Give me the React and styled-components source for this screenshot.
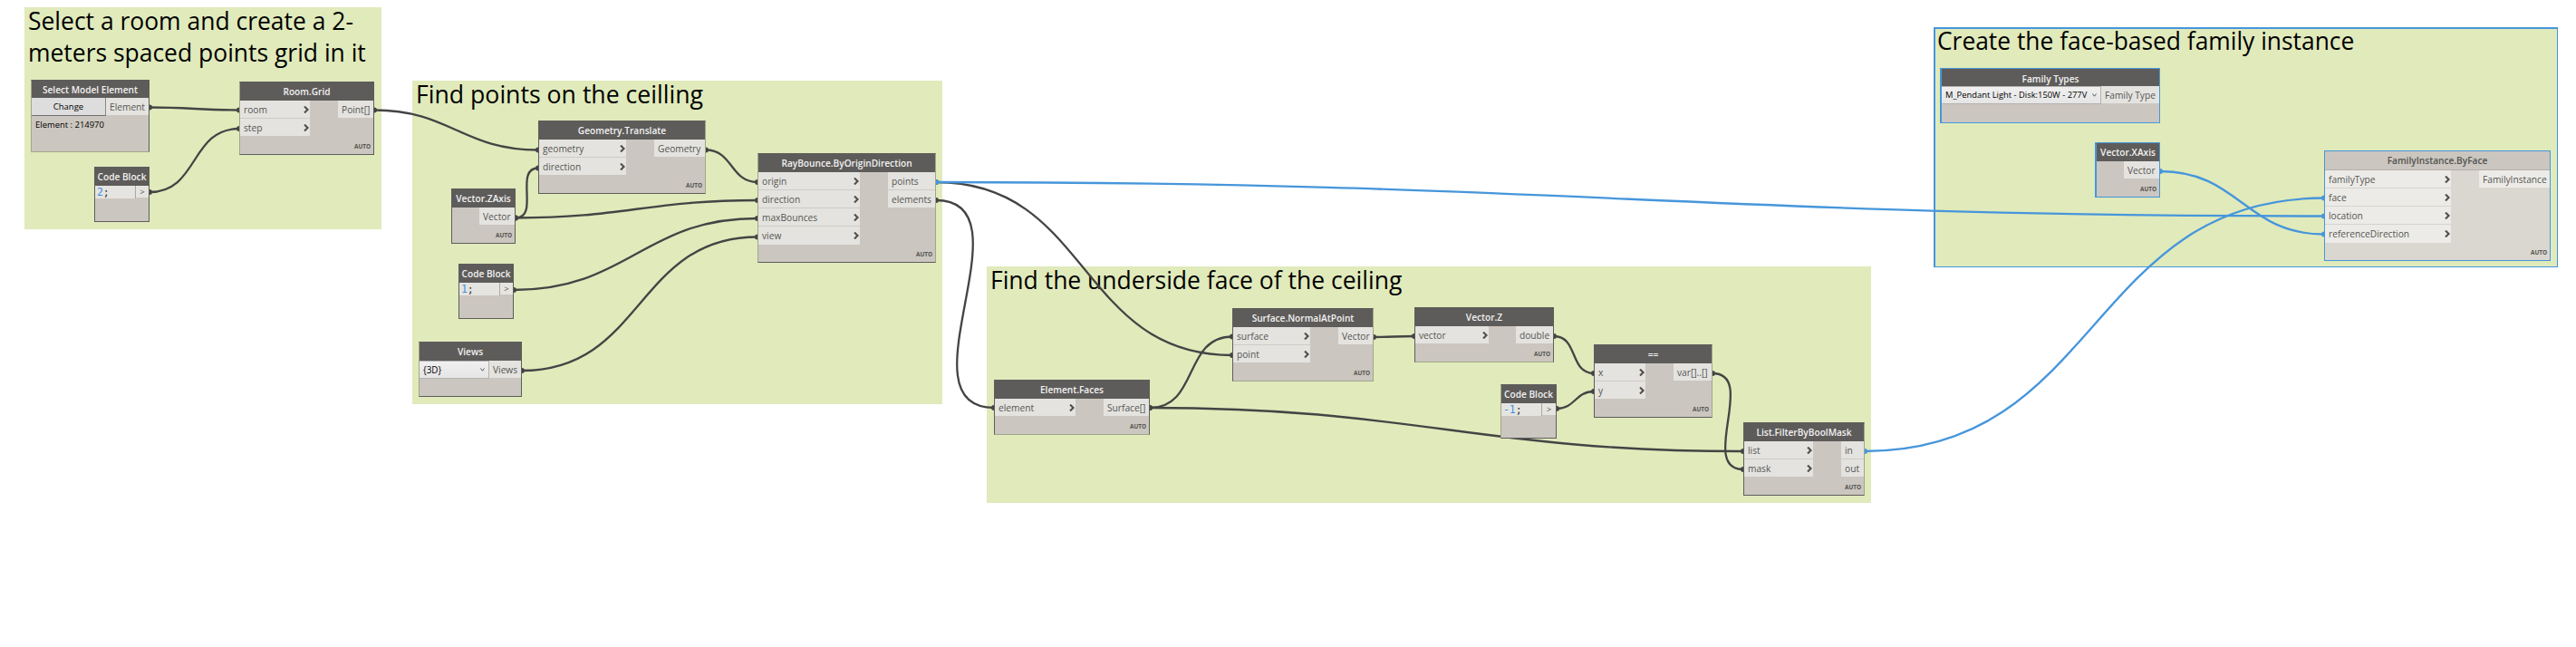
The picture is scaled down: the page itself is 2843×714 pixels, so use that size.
import React from "react";
import styled, { createGlobalStyle, css } from "styled-components";

const BLUE = "#4696db";
const WIRE = "#444444";
const EDGE = "#5e5d5b";
const SOFT_EDGE = "#a3a689";

const Global = createGlobalStyle`
  body { margin: 0; background: #fff; }
  * { box-sizing: border-box; }
`;

const Canvas = styled.main`
  position: relative;
  width: 2843px;
  height: 714px;
  overflow: hidden;
  background: #fff;
  font-family: "Open Sans", "Noto Sans", sans-serif;
`;

const Group = styled.section`
  position: absolute;
  left: ${(p) => p.$x}px;
  top: ${(p) => p.$y}px;
  width: ${(p) => p.$w}px;
  height: ${(p) => p.$h}px;
  padding-left: 3.7px;
  background: #e0eabb;
  ${(p) =>
    p.$selected &&
    css`
      border: 1px solid ${BLUE};
      border-width: 2px 1px 1px 2px;
      padding-left: 2px;
    `}
`;

const GroupTitle = styled.h2`
  margin: ${(p) => (p.$selected ? -4 : -2)}px 0 0;
  font-size: 27px;
  font-weight: 400;
  line-height: 34.7px;
  color: #000;
  white-space: pre;
  transform: scaleX(${(p) => p.$stretch});
  transform-origin: left top;
`;

const Wires = styled.svg`
  position: absolute;
  inset: 0;
  fill: none;
`;

const NodeBox = styled.article`
  position: absolute;
  left: ${(p) => p.$x}px;
  top: ${(p) => p.$y}px;
  width: ${(p) => p.$w}px;
  height: ${(p) => p.$h}px;
  display: flex;
  flex-direction: column;
  border: 1px solid ${(p) => (p.$selected ? BLUE : EDGE)};
  ${(p) => (p.$soft ?? []).map((side) => `border-${side}-color: ${SOFT_EDGE};`)}
  ${(p) => p.$thick && css`border-left-width: 2px;`}
  background: ${(p) => (p.$inactive ? "#dad7d0" : "#cbc6bf")};
`;

const Header = styled.header`
  flex: none;
  height: ${(p) => p.$h}px;
  padding-top: ${(p) => p.$pt ?? 0}px;
  display: flex;
  align-items: center;
  justify-content: center;
  background: #5e5c5a;
  color: #f2f2f2;
  font-size: 10.15px;
  font-weight: 600;
  line-height: 18px;
  white-space: nowrap;
  ${(p) =>
    p.$inactive &&
    css`
      background: #cbc6bf;
      color: #525250;
      border-bottom: 1px solid #b4afa8;
    `}
`;

const Body = styled.div`
  flex: 1;
  display: flex;
  justify-content: space-between;
  align-items: flex-start;
`;

const Ports = styled.div`
  display: flex;
  flex-direction: column;
  gap: 1px;
  width: ${(p) => p.$w}px;
  background: ${(p) => (p.$inactive ? "#d6d4cf" : "#cfccc7")};
  ${(p) => p.$right && css`margin-left: auto;`}
`;

const Port = styled.div`
  height: 19.15px;
  display: flex;
  align-items: center;
  justify-content: space-between;
  padding: 0 4px;
  background: ${(p) => (p.$inactive ? "#ecebe7" : "#e4e3df")};
  color: #555553;
  font-size: 10.2px;
  line-height: 14px;
  white-space: nowrap;
`;

const Chevron = styled.svg`
  flex: none;
  width: 6px;
  height: 8px;
  margin-right: -3px;
  fill: none;
  stroke: #4f4e4c;
  stroke-width: 2.1;
`;

const Auto = styled.footer`
  position: absolute;
  right: 3px;
  bottom: 3px;
  font-size: 6.4px;
  line-height: 10px;
  font-weight: 700;
  color: #555452;
`;

const Change = styled.button`
  width: 82px;
  height: 20px;
  padding: 0;
  border: 0;
  border-right: 1px solid #8a8986;
  border-bottom: 1px solid #707070;
  background: #dddddd;
  font: 400 9.5px/18px "Open Sans", sans-serif;
  color: #000;
`;

const Note = styled.p`
  margin: 0;
  height: 39px;
  padding: 4px 0 0 4px;
  font-size: 9.45px;
  line-height: 12px;
  color: #000;
`;

const Code = styled.code`
  width: 45px;
  height: 14px;
  padding-left: 2px;
  border-right: 1px solid #aaa7a3;
  background: #e6e4e0;
  font: 400 11.4px/15px "DejaVu Sans Mono", "Liberation Mono", monospace;
  color: #333;
  white-space: nowrap;
`;

const Num = styled.span`
  color: #3890e8;
`;

const CodeOut = styled.div`
  flex: 1;
  height: 13px;
  background: #e6e4e0;
  color: #555;
  font-size: 9.5px;
  line-height: 13px;
  text-align: center;
`;

const Select = styled.div`
  width: ${(p) => p.$w}px;
  height: 20px;
  display: flex;
  align-items: center;
  justify-content: space-between;
  padding: 0 4px 1px 4px;
  border: 1px solid #b4b2b0;
  border-left: 0;
  background: linear-gradient(#f0f0f0, #e5e5e5);
  color: #000;
  font-size: ${(p) => p.$fs}px;
  line-height: 16px;
  white-space: nowrap;
`;

const Arrow = styled.svg`
  width: 5px;
  height: 4px;
  fill: none;
  stroke: #555;
`;

function Node({ x, y, r, b, title, hh = 20, ins = [], outs, inW, outW, selected, thick, inactive, soft }) {
  return (
    <NodeBox $x={x} $y={y} $w={r - x} $h={b - y} $selected={selected} $thick={thick} $inactive={inactive} $soft={soft}>
      <Header $h={hh} $inactive={inactive}>{title}</Header>
      <Body>
        {ins.length > 0 && (
          <Ports $w={inW} $inactive={inactive}>
            {ins.map((name) => (
              <Port key={name} $inactive={inactive}>
                {name}
                <Chevron viewBox="0 0 6 8"><path d="M1 0.5 4.5 4 1 7.5" /></Chevron>
              </Port>
            ))}
          </Ports>
        )}
        <Ports $w={outW} $right $inactive={inactive}>
          {outs.map((name) => (
            <Port key={name} $inactive={inactive}>{name}</Port>
          ))}
        </Ports>
      </Body>
      <Auto>AUTO</Auto>
    </NodeBox>
  );
}

function CodeBlock({ x, y, r, b, value, soft }) {
  return (
    <NodeBox $x={x} $y={y} $w={r - x} $h={b - y} $soft={soft}>
      <Header $h={20}>Code Block</Header>
      <Body>
        <Code><Num>{value}</Num>;</Code>
        <CodeOut>&gt;</CodeOut>
      </Body>
    </NodeBox>
  );
}

function Dropdown({ x, y, r, b, hh = 20, pt, fs = 9.9, title, value, w, port, selected, thick, soft }) {
  return (
    <NodeBox $x={x} $y={y} $w={r - x} $h={b - y} $selected={selected} $thick={thick} $soft={soft}>
      <Header $h={hh} $pt={pt}>{title}</Header>
      <Body>
        <Select $w={w} $fs={fs}>
          {value}
          <Arrow viewBox="0 0 5 4"><path d="M0.5 0.5 2.5 3.2 4.5 0.5" /></Arrow>
        </Select>
        <Ports $w={r - x - w - (thick ? 3 : 2)}>
          <Port>{port}</Port>
        </Ports>
      </Body>
    </NodeBox>
  );
}

const wires = [
  [165, 118.5, 264, 121.5],
  [165, 212, 264, 142],
  [413, 121.5, 594, 165.5],
  [569, 240.5, 594, 185.5],
  [569, 240.5, 836, 221],
  [779, 165.5, 836, 201],
  [567, 320, 836, 241],
  [576, 409, 836, 261.5],
  [1033, 201, 1360, 392],
  [1033, 221, 1097, 450],
  [1269, 450, 1360, 371.5],
  [1269, 450, 1924, 498],
  [1516, 372, 1561, 371],
  [1715, 371, 1759, 412],
  [1718, 451, 1759, 432],
  [1890, 412, 1924, 518],
  [1033, 201, 2565, 238.5, 1],
  [2058, 498, 2565, 218.5, 1],
  [2384, 189, 2565, 258.5, 1],
];

function Wire({ w: [x0, y0, x1, y1, blue] }) {
  const off = 0.45 * Math.hypot(x1 - x0, y1 - y0);
  const color = blue ? BLUE : WIRE;
  return (
    <g stroke={color} strokeWidth="2.3">
      <path d={`M${x0} ${y0}C${x0 + off} ${y0} ${x1 - off} ${y1} ${x1} ${y1}`} />
      <path d={`M${x0} ${y0 - 3}a3 3 0 0 1 0 6z`} fill={color} stroke="none" />
      <path d={`M${x1} ${y1 - 3}a3 3 0 0 0 0 6z`} fill={color} stroke="none" />
    </g>
  );
}

export default function App() {
  return (
    <>
      <Global />
      <Canvas>
        <Group $x={27} $y={8} $w={394} $h={245}>
          <GroupTitle $stretch={0.98}>{"Select a room and create a 2-\nmeters spaced points grid in it"}</GroupTitle>
        </Group>
        <Group $x={455} $y={89} $w={585} $h={357}>
          <GroupTitle $stretch={0.987}>Find points on the ceilling</GroupTitle>
        </Group>
        <Group $x={1089} $y={294} $w={976} $h={261}>
          <GroupTitle $stretch={0.981}>Find the underside face of the ceiling</GroupTitle>
        </Group>
        <Group $x={2134} $y={30} $w={689} $h={265} $selected>
          <GroupTitle $stretch={0.977} $selected>Create the face-based family instance</GroupTitle>
        </Group>

        <Wires width="2843" height="714">
          {wires.map((w) => <Wire key={w.join()} w={w} />)}
        </Wires>

        <NodeBox $x={34} $y={88} $w={131} $h={80} $soft={["left", "bottom"]}>
          <Header $h={19}>Select Model Element</Header>
          <Body>
            <Change>Change</Change>
            <Ports $w={47}><Port>Element</Port></Ports>
          </Body>
          <Note>Element : 214970</Note>
        </NodeBox>
        <Node x={264} y={90} r={413} b={171} soft={["left"]} title="Room.Grid" inW={77} outW={39} ins={["room", "step"]} outs={["Point[]"]} />
        <CodeBlock x={104} y={184} r={165} b={245} value="2" />

        <Node x={594} y={133} r={779} b={214} soft={["right"]} title="Geometry.Translate" inW={96} outW={56} ins={["geometry", "direction"]} outs={["Geometry"]} />
        <Node x={498} y={208} r={569} b={269} title="Vector.ZAxis" outW={39} outs={["Vector"]} />
        <CodeBlock x={506} y={291} r={567} b={352} value="1" />
        <Dropdown x={462} y={377} r={576} b={438} soft={["left"]} title="Views" value="{3D}" w={77} port="Views" />
        <Node x={836} y={169} r={1033} b={290} soft={["left", "right"]} title="RayBounce.ByOriginDirection" inW={112} outW={52} ins={["origin", "direction", "maxBounces", "view"]} outs={["points", "elements"]} />

        <Node x={1097} y={419} r={1269} b={480} soft={["bottom"]} title="Element.Faces" inW={89} outW={50} ins={["element"]} outs={["Surface[]"]} />
        <Node x={1360} y={340} r={1516} b={421} soft={["right", "bottom"]} title="Surface.NormalAtPoint" inW={85} outW={38} ins={["surface", "point"]} outs={["Vector"]} />
        <Node x={1561} y={339} r={1715} b={400} soft={["bottom"]} title="Vector.Z" inW={81} outW={41} ins={["vector"]} outs={["double"]} />
        <CodeBlock x={1656} y={424} r={1718} b={484} soft={["left"]} value="-1" />
        <Node x={1759} y={380} r={1890} b={461} soft={["right"]} title="==" inW={56} outW={42} ins={["x", "y"]} outs={["var[]..[]"]} />
        <Node x={1924} y={466} r={2058} b={547} soft={["right"]} title="List.FilterByBoolMask" inW={76} outW={25} ins={["list", "mask"]} outs={["in", "out"]} />

        <Dropdown selected thick x={2141} y={75} r={2384} b={136} hh={19} pt={2} fs={9.4} title="Family Types" value="M_Pendant Light - Disk:150W - 277V" w={176} port="Family Type" />
        <Node selected thick x={2312} y={157} r={2384} b={218} title="Vector.XAxis" outW={39} outs={["Vector"]} />
        <Node selected inactive x={2565} y={166} r={2815} b={288} title="FamilyInstance.ByFace" inW={139} outW={78} hh={21} ins={["familyType", "face", "location", "referenceDirection"]} outs={["FamilyInstance"]} />
      </Canvas>
    </>
  );
}
